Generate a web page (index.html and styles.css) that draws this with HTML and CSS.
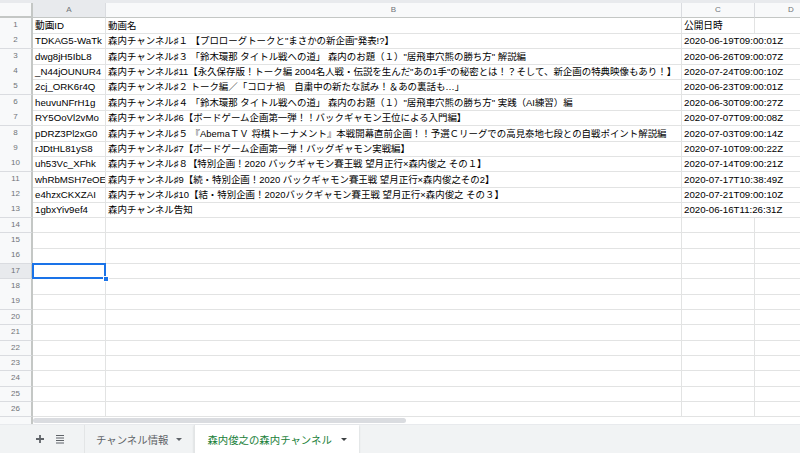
FILE: index.html
```html
<!DOCTYPE html>
<html lang="ja">
<head>
  <meta charset="UTF-8" />
  <meta name="viewport" content="width=device-width, initial-scale=1.0"/>
  <title>森内俊之の森内チャンネル</title>
  <link rel="stylesheet" href="styles.css">
</head>
<body>
  <div class="sheet">
    <div class="row col-head">
      <div class="corner"></div>
      <div class="letter active">A</div>
      <div class="letter">B</div>
      <div class="letter">C</div>
      <div class="letter">D</div>
    </div>

    <div class="row">
      <div class="num">1</div>
      <div class="cell">動画ID</div>
      <div class="cell title">動画名</div>
      <div class="cell">公開日時</div>
      <div class="cell"></div>
    </div>
    <div class="row">
      <div class="num">2</div>
      <div class="cell">TDKAG5-WaTk</div>
      <div class="cell title">森内チャンネル♯１ 【プロローグトークと"まさかの新企画"発表!?】</div>
      <div class="cell spill">2020-06-19T09:00:01Z</div>
      <div class="cell"></div>
    </div>
    <div class="row">
      <div class="num">3</div>
      <div class="cell">dwg8jH5IbL8</div>
      <div class="cell title">森内チャンネル♯３ 「鈴木環那 タイトル戦への道」 森内のお題（１）"居飛車穴熊の勝ち方" 解説編</div>
      <div class="cell spill">2020-06-26T09:00:07Z</div>
      <div class="cell"></div>
    </div>
    <div class="row">
      <div class="num resize">4</div>
      <div class="cell">_N44jOUNUR4</div>
      <div class="cell title">森内チャンネル♯11【永久保存版！トーク編 2004名人戦・伝説を生んだ"あの1手"の秘密とは！？そして、新企画の特典映像もあり！】</div>
      <div class="cell spill">2020-07-24T09:00:10Z</div>
      <div class="cell"></div>
    </div>
    <div class="row">
      <div class="num">5</div>
      <div class="cell">2cj_ORK6r4Q</div>
      <div class="cell title">森内チャンネル♯２ トーク編／「コロナ禍　自粛中の新たな試み！＆あの裏話も…」</div>
      <div class="cell spill">2020-06-23T09:00:01Z</div>
      <div class="cell"></div>
    </div>
    <div class="row">
      <div class="num">6</div>
      <div class="cell">heuvuNFrH1g</div>
      <div class="cell title">森内チャンネル♯４ 「鈴木環那 タイトル戦への道」 森内のお題（１）"居飛車穴熊の勝ち方" 実践（AI練習）編</div>
      <div class="cell spill">2020-06-30T09:00:27Z</div>
      <div class="cell"></div>
    </div>
    <div class="row">
      <div class="num">7</div>
      <div class="cell">RY5OoVl2vMo</div>
      <div class="cell title">森内チャンネル♯6【ボードゲーム企画第一弾！！バックギャモン王位による入門編】</div>
      <div class="cell spill">2020-07-07T09:00:08Z</div>
      <div class="cell"></div>
    </div>
    <div class="row">
      <div class="num">8</div>
      <div class="cell">pDRZ3Pl2xG0</div>
      <div class="cell title">森内チャンネル♯５ 『AbemaＴＶ 将棋トーナメント』本戦開幕直前企画！！予選Ｃリーグでの高見泰地七段との自戦ポイント解説編</div>
      <div class="cell spill">2020-07-03T09:00:14Z</div>
      <div class="cell"></div>
    </div>
    <div class="row">
      <div class="num">9</div>
      <div class="cell">rJDtHL81yS8</div>
      <div class="cell title">森内チャンネル♯7【ボードゲーム企画第一弾！バッグギャモン実戦編】</div>
      <div class="cell spill">2020-07-10T09:00:22Z</div>
      <div class="cell"></div>
    </div>
    <div class="row">
      <div class="num">10</div>
      <div class="cell">uh53Vc_XFhk</div>
      <div class="cell title">森内チャンネル♯８【特別企画！2020 バックギャモン賽王戦 望月正行×森内俊之 その１】</div>
      <div class="cell spill">2020-07-14T09:00:21Z</div>
      <div class="cell"></div>
    </div>
    <div class="row">
      <div class="num">11</div>
      <div class="cell">whRbMSH7eOE</div>
      <div class="cell title">森内チャンネル♯9【続・特別企画！2020 バックギャモン賽王戦 望月正行×森内俊之その2】</div>
      <div class="cell spill">2020-07-17T10:38:49Z</div>
      <div class="cell"></div>
    </div>
    <div class="row">
      <div class="num">12</div>
      <div class="cell">e4hzxCKXZAI</div>
      <div class="cell title">森内チャンネル♯10【結・特別企画！2020バックギャモン賽王戦 望月正行×森内俊之 その３】</div>
      <div class="cell spill">2020-07-21T09:00:10Z</div>
      <div class="cell"></div>
    </div>
    <div class="row">
      <div class="num">13</div>
      <div class="cell">1gbxYiv9ef4</div>
      <div class="cell title">森内チャンネル告知</div>
      <div class="cell spill">2020-06-16T11:26:31Z</div>
      <div class="cell"></div>
    </div>
    <div class="row"><div class="num">14</div><div class="cell"></div><div class="cell"></div><div class="cell"></div><div class="cell"></div></div>
    <div class="row"><div class="num">15</div><div class="cell"></div><div class="cell"></div><div class="cell"></div><div class="cell"></div></div>
    <div class="row"><div class="num">16</div><div class="cell"></div><div class="cell"></div><div class="cell"></div><div class="cell"></div></div>
    <div class="row"><div class="num active">17</div><div class="cell selected"><span class="handle"></span></div><div class="cell"></div><div class="cell"></div><div class="cell"></div></div>
    <div class="row"><div class="num">18</div><div class="cell"></div><div class="cell"></div><div class="cell"></div><div class="cell"></div></div>
    <div class="row"><div class="num">19</div><div class="cell"></div><div class="cell"></div><div class="cell"></div><div class="cell"></div></div>
    <div class="row"><div class="num">20</div><div class="cell"></div><div class="cell"></div><div class="cell"></div><div class="cell"></div></div>
    <div class="row"><div class="num">21</div><div class="cell"></div><div class="cell"></div><div class="cell"></div><div class="cell"></div></div>
    <div class="row"><div class="num">22</div><div class="cell"></div><div class="cell"></div><div class="cell"></div><div class="cell"></div></div>
    <div class="row"><div class="num">23</div><div class="cell"></div><div class="cell"></div><div class="cell"></div><div class="cell"></div></div>
    <div class="row"><div class="num">24</div><div class="cell"></div><div class="cell"></div><div class="cell"></div><div class="cell"></div></div>
    <div class="row"><div class="num">25</div><div class="cell"></div><div class="cell"></div><div class="cell"></div><div class="cell"></div></div>
    <div class="row"><div class="num">26</div><div class="cell"></div><div class="cell"></div><div class="cell"></div><div class="cell"></div></div>
  </div>

  <div class="scroll">
    <div class="scroll-gutter"></div>
    <div class="scroll-thumb"></div>
  </div>

  <div class="tabs">
    <button class="tool" title="シートを追加">
      <svg width="10" height="10" viewBox="0 0 10 10"><path d="M5 1v8M1 5h8" stroke="#5f6368" stroke-width="1.8"/></svg>
    </button>
    <button class="tool" title="すべてのシート">
      <svg width="10" height="10" viewBox="0 0 10 10"><path d="M1 1.5h8M1 4h8M1 6.5h8M1 9h8" stroke="#5f6368" stroke-width="1.2"/></svg>
    </button>
    <div class="tab">チャンネル情報<span class="caret"></span></div>
    <div class="tab current">森内俊之の森内チャンネル<span class="caret"></span></div>
  </div>
</body>
</html>
```

FILE: styles.css
```css
* {
  box-sizing: border-box;
  margin: 0;
  padding: 0;
}

body {
  width: 800px;
  height: 453px;
  overflow: hidden;
  display: flex;
  flex-direction: column;
  background: #fff;
  font-family: "Liberation Sans", Arial, "Noto Sans CJK JP", sans-serif;
  color: #000;
}

.sheet {
  border-top: 3px solid #e8eaed;
  overflow: hidden;
}

.row {
  display: grid;
  grid-template-columns: 33px 73px 576px 73px 73px;
  height: 15.37px;
  width: 828px;
}

.col-head {
  height: 15px;
}

.corner {
  background: #f8f9fa;
  border-right: 2px solid #c4c7c5;
  border-bottom: 2px solid #c4c7c5;
}

.letter {
  background: #f8f9fa;
  border-right: 1px solid #dadce0;
  border-bottom: 1px solid #c4c7c5;
  color: #6f7377;
  font-size: 8px;
  line-height: 14px;
  text-align: center;
}

.letter.active {
  background: #e8eaed;
}

.num {
  background: #f8f9fa;
  border-right: 2px solid #c4c7c5;
  border-bottom: 1px solid #dadce0;
  color: #6f7377;
  font-size: 8px;
  line-height: 14.5px;
  text-align: center;
}

.num.active {
  background: #e8eaed;
}

.num.resize {
  border-bottom: 1px dashed #1a73e8;
}

.cell {
  border-right: 1px solid #e2e3e3;
  border-bottom: 1px solid #e2e3e3;
  font-size: 9.7px;
  line-height: 15px;
  padding-left: 2px;
  white-space: nowrap;
  overflow: hidden;
}

.cell.title {
  font-size: 9.45px;
}

.cell.spill {
  overflow: visible;
  border-right: none;
}

.cell.selected {
  position: relative;
  overflow: visible;
  border: 2px solid #1a73e8;
  margin: -1px 0 0 -1px;
}

.handle {
  position: absolute;
  right: -5px;
  bottom: -5px;
  width: 6px;
  height: 6px;
  background: #1a73e8;
  border: 1px solid #fff;
}

.scroll {
  display: flex;
  align-items: center;
  height: 7px;
  flex-shrink: 0;
}

.scroll-gutter {
  width: 33px;
  height: 100%;
  background: #f8f9fa;
  border-right: 2px solid #c4c7c5;
}

.scroll-thumb {
  width: 373px;
  height: 5px;
  border-radius: 3px;
  background: #dadce0;
}

.tabs {
  flex: 1;
  display: flex;
  align-items: stretch;
  background: #f1f3f4;
  border-top: 1px solid #e8eaed;
  padding-left: 30px;
}

.tool {
  width: 20px;
  border: none;
  background: none;
  display: flex;
  align-items: center;
  justify-content: center;
}

.tool + .tool {
  margin-right: 14px;
}

.tab {
  display: flex;
  align-items: center;
  gap: 8px;
  padding: 0 12px 0 11px;
  font-size: 10.4px;
  color: #5f6368;
  border-left: 1px solid #e3e5e6;
}

.tab.current {
  background: #fff;
  color: #188038;
  padding: 0 12px;
  gap: 9px;
  box-shadow: 0 1px 2px rgba(60, 64, 67, 0.2);
}

.caret {
  width: 0;
  height: 0;
  border-left: 3px solid transparent;
  border-right: 3px solid transparent;
  border-top: 3px solid #5f6368;
}

.tab.current .caret {
  border-top-color: #3c4043;
}
```
